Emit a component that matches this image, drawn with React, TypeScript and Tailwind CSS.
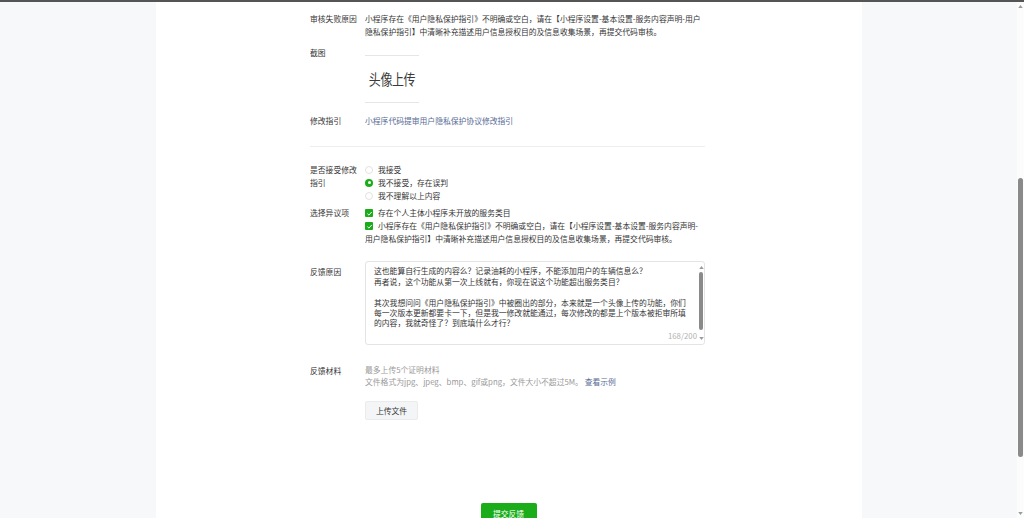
import type { ReactNode } from "react";

const FONT = { fontFamily: '"Noto Sans CJK SC", "Noto Sans", sans-serif' };

interface FieldProps {
  label: string;
  className?: string;
  labelClassName?: string;
  children: ReactNode;
}

// 表单一行：左侧标签 + 右侧内容
function Field({ label, className = "", labelClassName = "", children }: FieldProps) {
  return (
    <div className={`flex ${className}`}>
      <div className={`w-[55px] shrink-0 pr-[4px] leading-[13px] text-[#353535] ${labelClassName}`}>{label}</div>
      <div className="w-[340px] min-w-0">{children}</div>
    </div>
  );
}

function Radio({ checked, label }: { checked?: boolean; label: string }) {
  return (
    <div className="flex items-center h-[13px]">
      {checked ? (
        <span className="w-[8px] h-[8px] rounded-full bg-[#1aad19] flex items-center justify-center shrink-0">
          <span className="w-[3px] h-[3px] rounded-full bg-white" />
        </span>
      ) : (
        <span className="w-[8px] h-[8px] rounded-full border border-[#e2e2e2] bg-white shrink-0" />
      )}
      <span className="ml-[5px]">{label}</span>
    </div>
  );
}

function CheckMark() {
  return (
    <span className="inline-flex w-[8px] h-[8px] bg-[#1aad19] rounded-[1px] items-center justify-center align-[-1px] mr-[5px]">
      <svg viewBox="0 0 10 10" width="7" height="7">
        <path d="M2 5.2 L4.2 7.3 L8.2 2.8" fill="none" stroke="white" strokeWidth="1.4" />
      </svg>
    </span>
  );
}

function Triangle({ up, className = "" }: { up?: boolean; className?: string }) {
  return (
    <svg viewBox="0 0 6 4" width="5" height="3" className={className}>
      <path d={up ? "M0 4 L3 0 L6 4 Z" : "M0 0 L3 4 L6 0 Z"} fill="#9a9a9a" />
    </svg>
  );
}

export default function App() {
  return (
    <div className="h-[518px] flex flex-col bg-[#f7f8fa] overflow-hidden text-[7.8px]" style={FONT}>
      <div className="h-[2px] bg-[#555] shrink-0" />
      <div className="flex flex-1 min-h-0">
        <div className="flex-1 flex justify-center">
          <div className="w-[706px] bg-white">
            <div className="w-[397px] mx-auto pt-[9.5px]">
              {/* 审核结果 */}
              <Field label="审核失败原因">
                <p className="leading-[13px] text-[#353535]">
                  小程序存在《用户隐私保护指引》不明确或空白，请在【小程序设置-基本设置-服务内容声明-用户隐私保护指引】中清晰补充描述用户信息授权目的及信息收集场景，再提交代码审核。
                </p>
              </Field>

              <Field label="截图" className="mt-[8px]">
                <div className="pt-[9.5px]">
                  <div className="w-[54px] h-[48px] border-y border-[#e6e6e6] flex items-center justify-center">
                    <span className="text-[12px] text-[#3a3a3a] scale-y-125 tracking-[-0.4px]">头像上传</span>
                  </div>
                </div>
              </Field>

              <Field label="修改指引" className="mt-[10.5px]">
                <a className="leading-[13px] text-[#576b95] block">小程序代码提审用户隐私保护协议修改指引</a>
              </Field>

              <div className="mt-[19.5px] h-px w-[395px] bg-[#eeeeee]" />

              {/* 申诉表单 */}
              <Field label="是否接受修改指引" className="mt-[16px]">
                <div className="text-[#353535] leading-[13px]">
                  <Radio label="我接受" />
                  <Radio checked label="我不接受，存在误判" />
                  <Radio label="我不理解以上内容" />
                </div>
              </Field>

              <Field label="选择异议项" className="mt-[3.5px]">
                <div className="text-[#353535] leading-[13px]">
                  <p>
                    <CheckMark />
                    存在个人主体小程序未开放的服务类目
                  </p>
                  <p>
                    <CheckMark />
                    小程序存在《用户隐私保护指引》不明确或空白，请在【小程序设置-基本设置-服务内容声明-用户隐私保护指引】中清晰补充描述用户信息授权目的及信息收集场景，再提交代码审核。
                  </p>
                </div>
              </Field>

              <Field label="反馈原因" className="mt-[16.5px]" labelClassName="pt-[3.5px]">
                <div className="relative h-[84px] border border-[#e4e4e4] rounded-[3px] flex">
                  <div className="w-[313px] ml-[8px] pt-[4.3px] leading-[10.4px] text-[#353535] whitespace-pre-line">
                    {"这也能算自行生成的内容么？记录油耗的小程序，不能添加用户的车辆信息么？\n再者说，这个功能从第一次上线就有，你现在说这个功能超出服务类目？\n\n其次我想问问《用户隐私保护指引》中被圈出的部分，本来就是一个头像上传的功能，你们每一次版本更新都要卡一下，但是我一修改就能通过，每次修改的都是上个版本被拒审所填的内容，我就奇怪了？到底填什么才行？"}
                  </div>
                  <div className="ml-auto w-[6px] flex flex-col items-center pt-[4px] pb-[4px]">
                    <Triangle up />
                    <div className="w-[4px] flex-1 mt-[3px] mb-[7px] bg-[#8a8a8a] rounded-full" />
                    <Triangle />
                  </div>
                  <span className="absolute right-[7px] bottom-[3px] leading-[10px] text-[#b2b2b2]">168/200</span>
                </div>
              </Field>

              <Field label="反馈材料" className="mt-[18.5px]">
                <div className="pt-[0.5px] leading-[12px] text-[#9a9a9a]">
                  <p>最多上传5个证明材料</p>
                  <p>
                    文件格式为jpg、jpeg、bmp、gif或png，文件大小不超过5M。 <a className="text-[#576b95]">查看示例</a>
                  </p>
                </div>
                <button className="mt-[13px] w-[53px] h-[19px] rounded-[2px] bg-[#f4f5f7] border border-[#ebebeb] text-[#353535] leading-none">
                  上传文件
                </button>
              </Field>
            </div>

            <div className="flex justify-center mt-[83px]">
              <button className="w-[56px] h-[22px] rounded-[2px] bg-[#1aad19] text-white leading-none">提交反馈</button>
            </div>
          </div>
        </div>

        {/* 页面滚动条 */}
        <div className="w-[7px] bg-[#fcfcfc] flex flex-col items-center pt-[3px] pb-[3px]">
          <Triangle up />
          <div className="w-[5px] h-[279px] mt-[170px] bg-[#8a8a8a] rounded-full" />
          <div className="flex-1" />
          <Triangle />
        </div>
      </div>
    </div>
  );
}
